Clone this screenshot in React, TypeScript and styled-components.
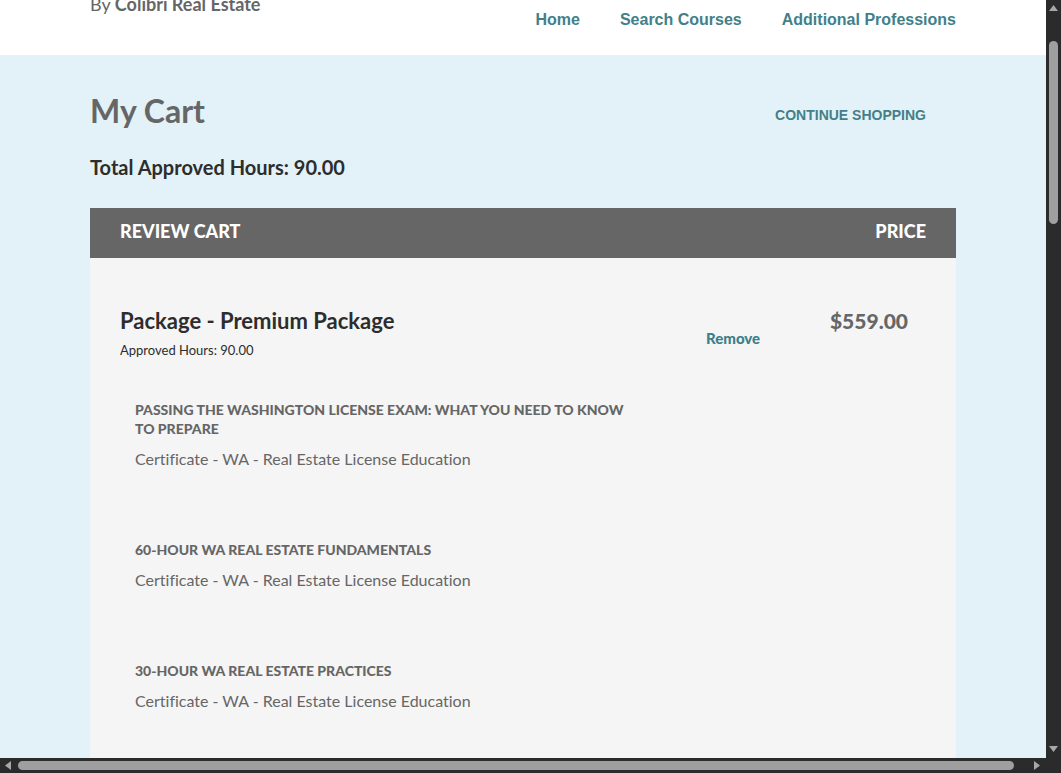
import React from "react";
import styled, { createGlobalStyle } from "styled-components";

const sans = `"Liberation Sans", Arial, sans-serif`;
const round = `Lato, "Liberation Sans", sans-serif`;

const GlobalStyle = createGlobalStyle`
  *, *::before, *::after { box-sizing: border-box; }
  body { margin: 0; overflow: hidden; font-family: ${round}; font-variant-ligatures: none; color: #666; background: #fff; }
  h1, h2, h3, p, ul { margin: 0; padding: 0; }
`;

const Frame = styled.div`
  display: grid;
  grid-template-columns: minmax(0, 1fr) 15px;
  grid-template-rows: minmax(0, 1fr) 15px;
  height: 100vh;
  background: #2b2b2b;
`;

const Page = styled.div`
  display: flex;
  flex-direction: column;
  overflow: hidden;
  background: #fff;
`;

const Header = styled.header`
  display: flex;
  justify-content: space-between;
  align-items: flex-start;
  flex: none;
  height: 55px;
  padding: 0 90px;
`;

const Brand = styled.p`
  font-size: 18px;
  line-height: 8px;
  white-space: nowrap;
`;

const Nav = styled.nav`
  display: flex;
  gap: 40px;
  padding-top: 10px;
`;

const NavLink = styled.a`
  font: bold 16px/20px ${sans};
  color: #437f88;
  text-decoration: none;
  white-space: nowrap;
`;

const Main = styled.main`
  flex: 1 0 auto;
  padding: 35px 90px 0;
  background: #e3f2f8;
`;

const TitleRow = styled.div`
  display: flex;
  justify-content: space-between;
  align-items: flex-end;
  padding-right: 30px;
`;

const Title = styled.h1`
  font-size: 32px;
  line-height: 42px;
`;

const ContinueLink = styled(NavLink)`
  font-size: 14px;
  line-height: 34px;
  text-transform: uppercase;
`;

const Hours = styled.h2`
  margin-top: 23px;
  font-size: 20px;
  line-height: 24px;
  color: #2d2d2d;
`;

const Cart = styled.table`
  width: 100%;
  margin-top: 29px;
  border-collapse: collapse;
  table-layout: fixed;
  background: #f5f5f5;
`;

const Col = styled.col<{ $width?: number }>`
  width: ${(p) => (p.$width ? `${p.$width}px` : "auto")};
`;

const HeadCell = styled.th<{ $align: "left" | "right" }>`
  height: 50px;
  padding: 0 30px 4px;
  background: #666;
  color: #fff;
  font-size: 18px;
  line-height: 24px;
  font-weight: 900;
  text-align: ${(p) => p.$align};
  text-transform: uppercase;
`;

const Cell = styled.td`
  padding: 50px 0 0;
  vertical-align: top;
`;

const ItemCell = styled(Cell)`
  padding-left: 30px;
`;

const RemoveCell = styled(Cell)`
  padding-top: 70px;
`;

const PriceCell = styled(Cell)`
  padding-right: 48px;
  text-align: right;
  font-size: 21px;
  line-height: 26px;
  font-weight: 900;
`;

const ItemName = styled.h2`
  font-size: 22px;
  line-height: 26px;
  color: #2d2d2d;
`;

const ItemHours = styled.p`
  margin-top: 6px;
  font-size: 13px;
  line-height: 20px;
  color: #2d2d2d;
`;

const RemoveButton = styled.button`
  padding: 0;
  border: 0;
  background: none;
  font: 900 15px/20px ${round};
  color: #3b8089;
  cursor: pointer;
`;

const Courses = styled.ul`
  display: flex;
  flex-direction: column;
  gap: 71px;
  margin-top: 40px;
  padding: 0 70px 71px 15px;
  list-style: none;
`;

const CourseTitle = styled.h3`
  font-size: 14px;
  line-height: 19px;
  font-weight: 900;
  text-transform: uppercase;
`;

const CourseNote = styled.p`
  margin-top: 11px;
  font-size: 16px;
  line-height: 20px;
`;

const Scrollbar = styled.div<{ $vertical?: boolean }>`
  display: flex;
  flex-direction: ${(p) => (p.$vertical ? "column" : "row")};
  align-items: center;
  justify-content: space-between;
  padding: ${(p) => (p.$vertical ? "5px 0 6px" : "0 6px 0 5px")};
`;

const Track = styled.div<{ $vertical?: boolean }>`
  display: flex;
  flex: 1;
  flex-direction: ${(p) => (p.$vertical ? "column" : "row")};
  padding: ${(p) => (p.$vertical ? "30px 0 0" : "0 20px 0 7px")};
`;

const Thumb = styled.div<{ $vertical?: boolean }>`
  flex: ${(p) => (p.$vertical ? "0 0 26%" : "1")};
  width: ${(p) => (p.$vertical ? "9px" : "auto")};
  height: ${(p) => (p.$vertical ? "auto" : "9px")};
  border-radius: 5px;
  background: #9f9f9f;
`;

const Arrow = ({ points, w, h }: { points: string; w: number; h: number }) => (
  <svg width={w} height={h} viewBox={`0 0 ${w} ${h}`} aria-hidden="true">
    <polygon points={points} fill="#a8a8a8" />
  </svg>
);

const navItems = ["Home", "Search Courses", "Additional Professions"];

const courses = [
  "Passing the Washington License Exam: What You Need to Know to Prepare",
  "60-Hour WA Real Estate Fundamentals",
  "30-Hour WA Real Estate Practices",
];

export default function App() {
  return (
    <Frame>
      <GlobalStyle />
      <Page>
        <Header>
          <Brand>
            By <b>Colibri Real Estate</b>
          </Brand>
          <Nav>
            {navItems.map((label) => (
              <NavLink href="#" key={label}>
                {label}
              </NavLink>
            ))}
          </Nav>
        </Header>
        <Main>
          <TitleRow>
            <Title>My Cart</Title>
            <ContinueLink href="#">Continue Shopping</ContinueLink>
          </TitleRow>
          <Hours>Total Approved Hours: 90.00</Hours>
          <Cart>
            <colgroup>
              <Col />
              <Col $width={100} />
              <Col $width={150} />
            </colgroup>
            <thead>
              <tr>
                <HeadCell $align="left" colSpan={2}>
                  Review Cart
                </HeadCell>
                <HeadCell $align="right">Price</HeadCell>
              </tr>
            </thead>
            <tbody>
              <tr>
                <ItemCell>
                  <ItemName>Package - Premium Package</ItemName>
                  <ItemHours>Approved Hours: 90.00</ItemHours>
                  <Courses>
                    {courses.map((name) => (
                      <li key={name}>
                        <CourseTitle>{name}</CourseTitle>
                        <CourseNote>Certificate - WA - Real Estate License Education</CourseNote>
                      </li>
                    ))}
                  </Courses>
                </ItemCell>
                <RemoveCell>
                  <RemoveButton type="button">Remove</RemoveButton>
                </RemoveCell>
                <PriceCell>$559.00</PriceCell>
              </tr>
            </tbody>
          </Cart>
        </Main>
      </Page>
      <Scrollbar $vertical>
        <Arrow w={9} h={6} points="4.5,0 9,6 0,6" />
        <Track $vertical>
          <Thumb $vertical />
        </Track>
        <Arrow w={9} h={6} points="0,0 9,0 4.5,6" />
      </Scrollbar>
      <Scrollbar>
        <Arrow w={6} h={9} points="6,0 6,9 0,4.5" />
        <Track>
          <Thumb />
        </Track>
        <Arrow w={6} h={9} points="0,0 6,4.5 0,9" />
      </Scrollbar>
    </Frame>
  );
}
